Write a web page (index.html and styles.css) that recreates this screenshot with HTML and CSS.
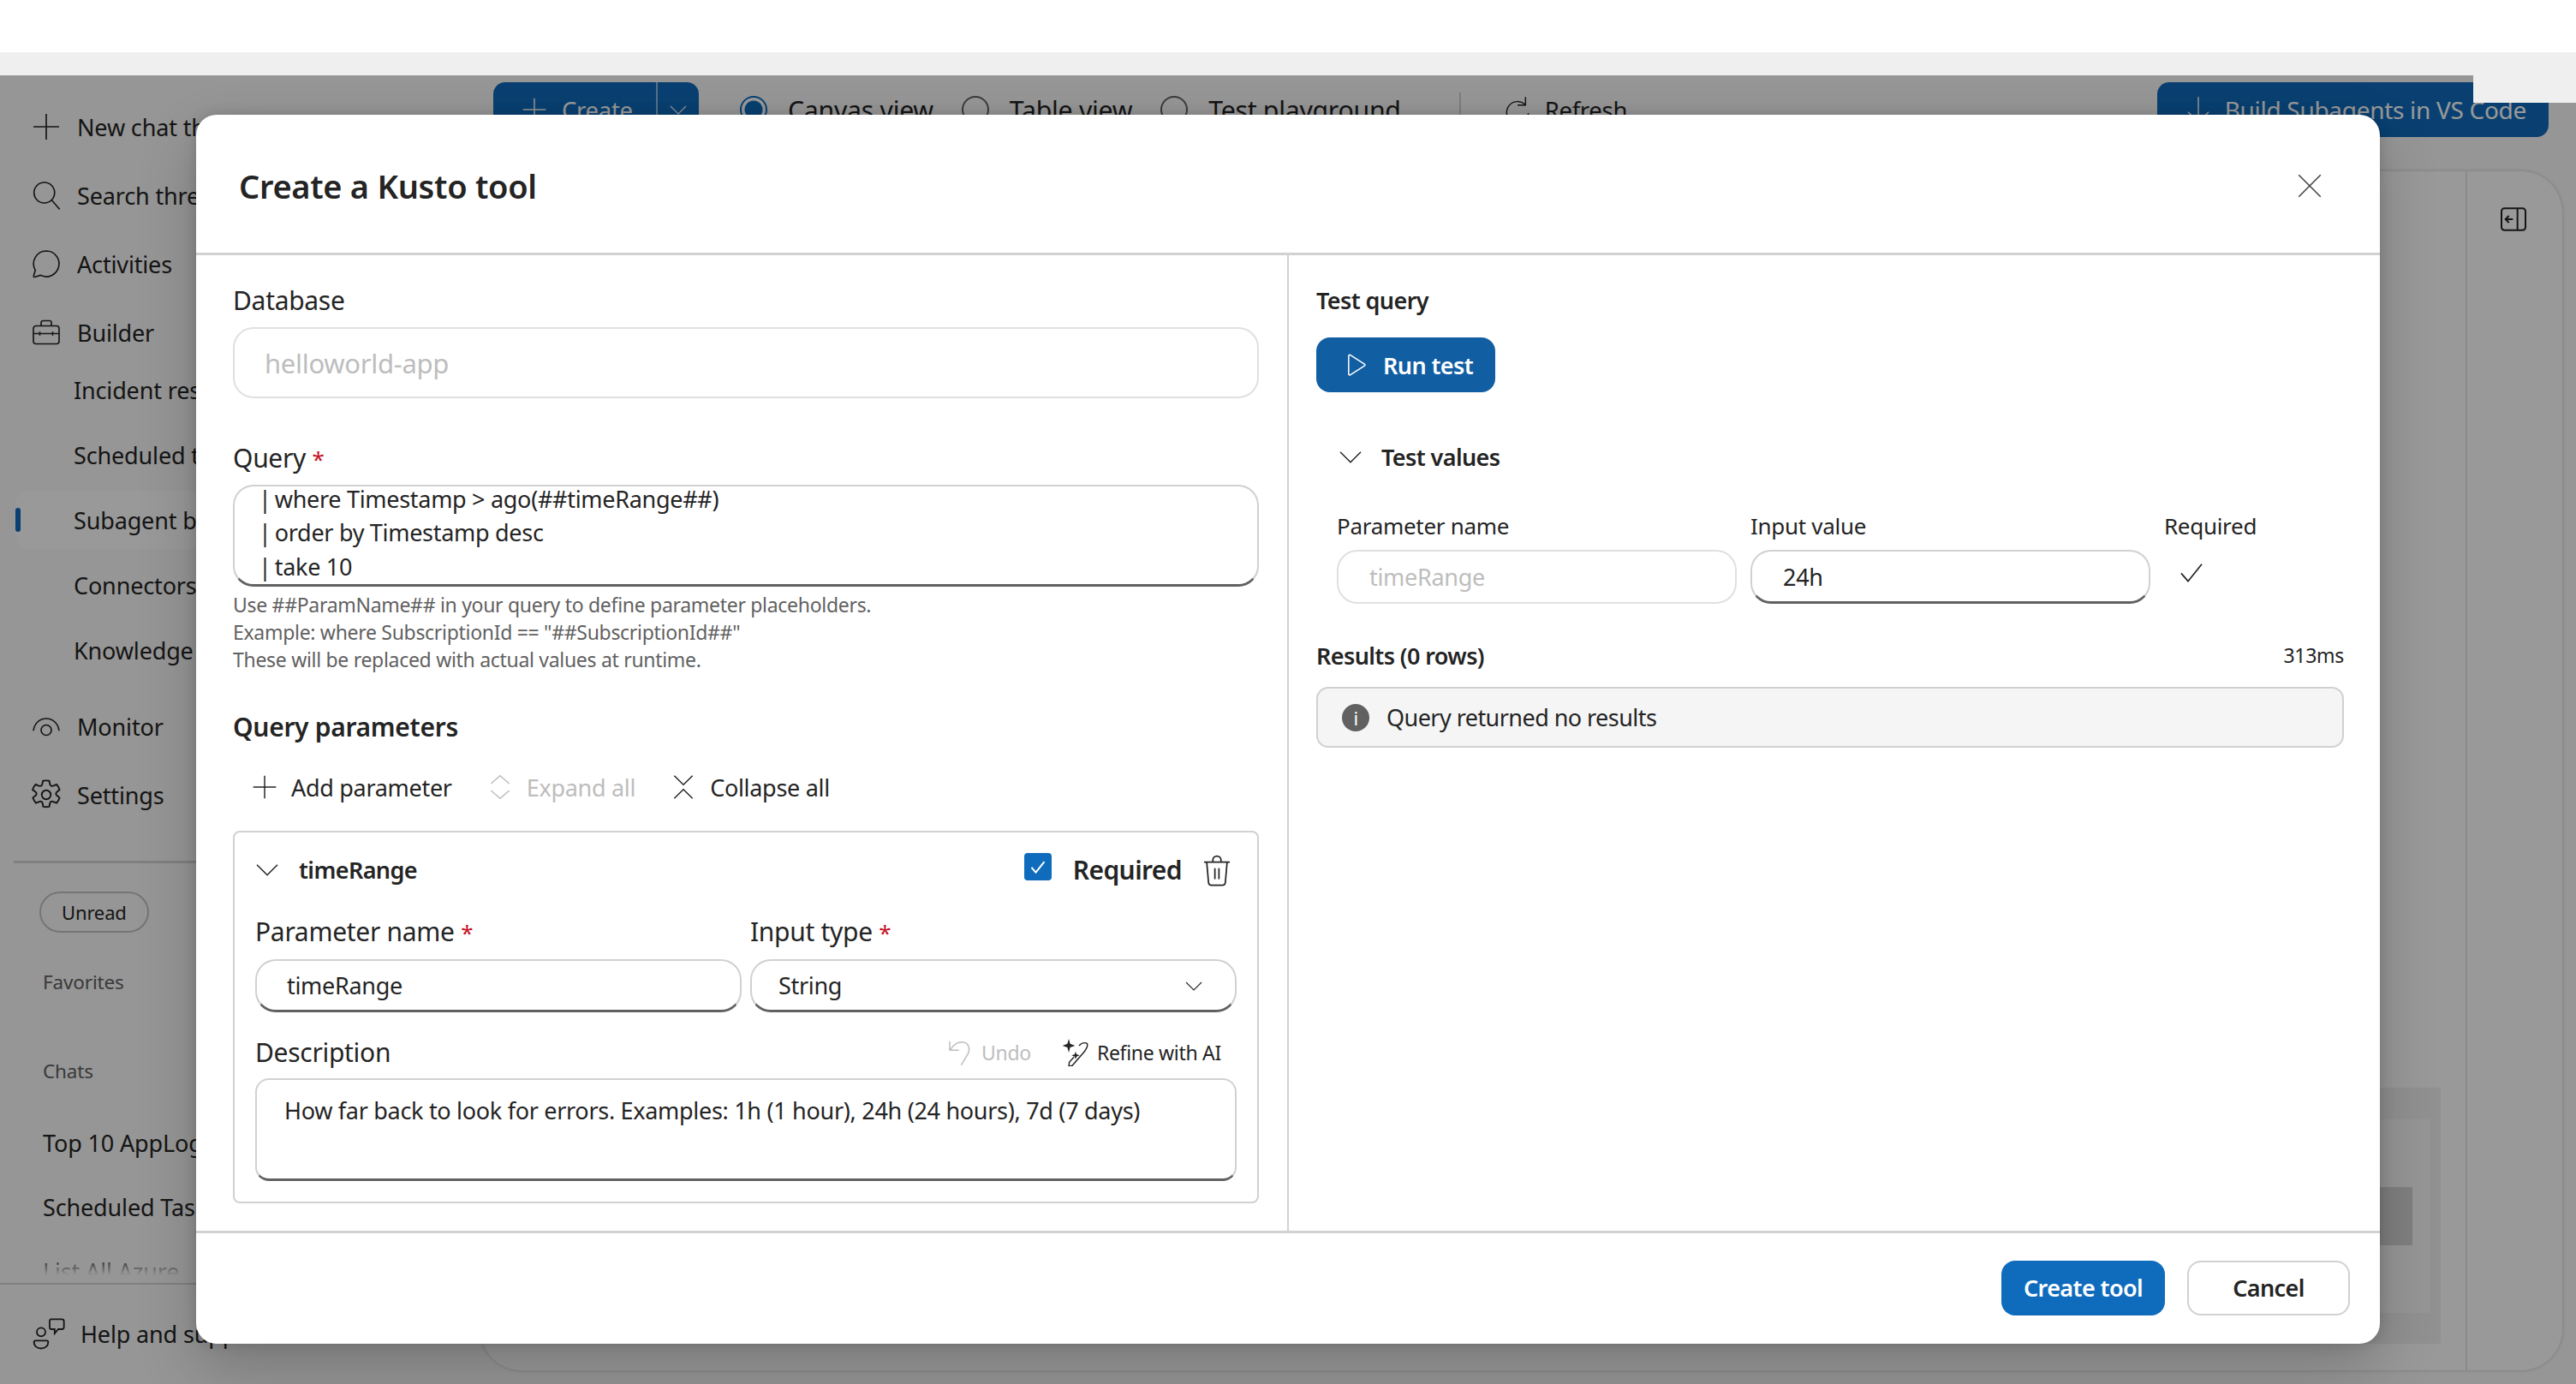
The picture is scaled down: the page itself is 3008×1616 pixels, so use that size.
FILE: index.html
```html
<!DOCTYPE html>
<html lang="en">
<head>
	<meta charset="UTF-8">
	<title>Create a Kusto tool</title>
	<link rel="stylesheet" href="styles.css">
</head>
<body>
<svg class="sprite" width="0" height="0">
	<symbol id="i-plus" viewBox="0 0 24 24"><path d="M12 2v20M2 12h20"/></symbol>
	<symbol id="i-search" viewBox="0 0 24 24"><circle cx="10.500" cy="10" r="8"/><path d="M16.300 15.800 22.500 23"/></symbol>
	<symbol id="i-chat" viewBox="0 0 24 24"><path d="M12 2a10 10 0 1 1-4.600 18.900L3 22.300c-.5.100-1-.3-.8-.9l1.300-4.400A10 10 0 0 1 12 2z"/></symbol>
	<symbol id="i-case" viewBox="0 0 24 24"><path d="M8 7V4.500C8 3.700 8.700 3 9.500 3h5c.8 0 1.500.7 1.500 1.500V7M4 7h16c1.100 0 2 .9 2 2v10c0 1.100-.9 2-2 2H4c-1.100 0-2-.9-2-2V9c0-1.100.9-2 2-2zM2 13h20M7 11.500v3M17 11.500v3"/></symbol>
	<symbol id="i-eye" viewBox="0 0 24 24"><path d="M2 15.500C2.800 9.500 7 6 12 6s9.200 3.500 10 9.500"/><circle cx="12" cy="15" r="4"/></symbol>
	<symbol id="i-gear" viewBox="0 0 24 24"><path d="M12 2.500c.7 0 1.400.1 2 .2l.5 2.300a1.500 1.500 0 0 0 2.200 1l2.200-.9c.9 1 1.600 2.200 2 3.500l-1.800 1.500a1.500 1.500 0 0 0 0 2.400l1.800 1.500c-.4 1.300-1.100 2.500-2 3.500l-2.200-.9a1.500 1.500 0 0 0-2.200 1l-.5 2.300c-.6.100-1.300.2-2 .2s-1.400-.1-2-.2l-.5-2.300a1.500 1.500 0 0 0-2.200-1l-2.200.9c-.9-1-1.600-2.200-2-3.500l1.800-1.500a1.500 1.500 0 0 0 0-2.400L2.900 8.600c.4-1.300 1.100-2.500 2-3.500l2.200.9a1.500 1.500 0 0 0 2.200-1l.5-2.300c.6-.1 1.300-.2 2-.2z"/><circle cx="12" cy="12" r="3"/></symbol>
	<symbol id="i-help" viewBox="0 0 24 24"><circle cx="6" cy="11" r="3"/><path d="M2 17h8c.6 0 1 .4 1 1 0 3-2.500 4.500-5 4.500S1 21 1 18c0-.6.4-1 1-1zM13 2h7.500c.8 0 1.500.7 1.500 1.500v4c0 .8-.7 1.500-1.500 1.500H18l-2.500 3V9H13c-.6 0-1-.7-1-1.500v-4C12 2.700 12.400 2 13 2z"/></symbol>
	<symbol id="i-down" viewBox="0 0 24 24"><path d="M3 8l9 9 9-9"/></symbol>
	<symbol id="i-arrow" viewBox="0 0 24 24"><path d="M12 1v22M3 14l9 9 9-9"/></symbol>
	<symbol id="i-close" viewBox="0 0 24 24"><path d="M3 3l18 18M21 3 3 21"/></symbol>
	<symbol id="i-expand" viewBox="0 0 24 24"><path d="M4 9l8-7 8 7M4 15l8 7 8-7"/></symbol>
	<symbol id="i-collapse" viewBox="0 0 24 24"><path d="M4 2l8 8 8-8M4 22l8-8 8 8"/></symbol>
	<symbol id="i-trash" viewBox="0 0 24 24"><path d="M2.500 5.500h19M9 5.500V4a3 3 0 0 1 6 0v1.500M4.500 5.500l1.300 15c.1 1.100 1 2 2.200 2h8c1.200 0 2.100-.9 2.200-2l1.300-15M10.500 10v8M13.500 10v8"/></symbol>
	<symbol id="i-undo" viewBox="0 0 24 24"><path d="M3 2v8h8M3 10c3-5 8-8 12-7 5 1 6 6 4 10l-6 10"/></symbol>
	<symbol id="i-refine" viewBox="0 0 24 24"><path class="solid" d="M6 0l1.200 4.300L11.500 6 7.200 7.500 6 12 4.800 7.500.5 6l4.300-1.700zM12 11l.8 2.500 2.700 1-2.700 1-.8 2.500-.8-2.500-2.700-1 2.700-1z"/><path d="M15 6c2-2.500 5-3 7-2 1 2-.5 5-3 8l-10 11.500-3 .5.500-3.500 4-4.500"/></symbol>
	<symbol id="i-play" viewBox="0 0 24 24"><path d="M5 3.200c0-1 1-1.500 1.800-1l14 9c.8.500.8 1.300 0 1.800l-14 9c-.8.500-1.800 0-1.800-1z"/></symbol>
	<symbol id="i-check" viewBox="0 0 24 24"><path d="M3 13l6 7L21 5"/></symbol>
	<symbol id="i-refresh" viewBox="0 0 24 24"><path d="M19 1v7h-7M19 8A9.500 9.500 0 1 0 21.500 15"/></symbol>
	<symbol id="i-panel" viewBox="0 0 24 24"><rect x="1.500" y="2.500" width="21" height="19" rx="2.500"/><path d="M15.500 2.500v19M11.500 12H5M8 9l-3 3 3 3"/></symbol>
</svg>

<div class="top-white"></div>
<div class="tab-strip"></div>

<div class="app">
	<aside class="sidebar">
		<nav class="nav">
			<a class="nav-row"><svg class="ic"><use href="#i-plus"/></svg>New chat thread</a>
			<a class="nav-row"><svg class="ic"><use href="#i-search"/></svg>Search threads</a>
			<a class="nav-row"><svg class="ic"><use href="#i-chat"/></svg>Activities</a>
			<a class="nav-row"><svg class="ic"><use href="#i-case"/></svg>Builder</a>
			<div class="sub-nav">
				<a class="sub-row">Incident response</a>
				<a class="sub-row">Scheduled tasks</a>
				<a class="sub-row on">Subagent builder</a>
				<a class="sub-row">Connectors</a>
				<a class="sub-row">Knowledge</a>
			</div>
			<a class="nav-row monitor"><svg class="ic"><use href="#i-eye"/></svg>Monitor</a>
			<a class="nav-row"><svg class="ic gear"><use href="#i-gear"/></svg>Settings</a>
		</nav>
		<div class="side-line"></div>
		<div class="chats">
			<span class="pill">Unread</span>
			<div class="side-head fav">Favorites</div>
			<div class="side-head chat-head">Chats</div>
			<div class="chat-row first">Top 10 AppLogs</div>
			<div class="chat-row">Scheduled Tasks</div>
			<div class="chat-row faded">List All Azure</div>
		</div>
		<div class="side-foot"><svg class="ic help"><use href="#i-help"/></svg>Help and support</div>
	</aside>

	<main class="main">
		<div class="toolbar">
			<div class="split-btn">
				<span class="split-main"><svg class="ic"><use href="#i-plus"/></svg>Create</span>
				<span class="split-arrow"><svg class="ic small"><use href="#i-down"/></svg></span>
			</div>
			<label class="radio checked"><i></i>Canvas view</label>
			<label class="radio"><i></i>Table view</label>
			<label class="radio"><i></i>Test playground</label>
			<span class="tool-line"></span>
			<span class="refresh"><svg class="ic"><use href="#i-refresh"/></svg>Refresh</span>
			<span class="vs-btn"><svg class="ic"><use href="#i-arrow"/></svg>Build Subagents in VS Code</span>
		</div>
		<section class="panel">
			<div class="canvas">
				<div class="node"><div class="node-inner"><div class="node-dark"></div></div></div>
			</div>
			<div class="rail"><svg class="ic panel-ic"><use href="#i-panel"/></svg></div>
		</section>
	</main>
	<div class="overlay"></div>
</div>
<div class="corner-patch"></div>

<div class="modal">
	<header class="modal-head">
		<h1>Create a Kusto tool</h1>
		<svg class="ic close"><use href="#i-close"/></svg>
	</header>
	<div class="modal-body">
		<div class="col-left">
			<div class="label db-label">Database</div>
			<div class="input disabled big">helloworld-app</div>
			<div class="label query-label">Query <b>*</b></div>
			<div class="code">
				<div>|&#8201;where Timestamp &gt; ago(##timeRange##)</div>
				<div>|&#8201;order by Timestamp desc</div>
				<div>|&#8201;take 10</div>
			</div>
			<div class="hint">Use ##ParamName## in your query to define parameter placeholders.<br>Example: where SubscriptionId == "##SubscriptionId##"<br>These will be replaced with actual values at runtime.</div>
			<h2>Query parameters</h2>
			<div class="actions">
				<span class="act"><svg class="ic"><use href="#i-plus"/></svg>Add parameter</span>
				<span class="act off"><svg class="ic"><use href="#i-expand"/></svg>Expand all</span>
				<span class="act"><svg class="ic"><use href="#i-collapse"/></svg>Collapse all</span>
			</div>
			<div class="param-card">
				<div class="param-head">
					<svg class="ic chev"><use href="#i-down"/></svg>
					<span class="param-name">timeRange</span>
					<span class="checkbox"><svg class="ic"><use href="#i-check"/></svg></span>
					<span class="param-req">Required</span>
					<svg class="ic trash"><use href="#i-trash"/></svg>
				</div>
				<div class="param-grid">
					<div>
						<div class="label">Parameter name <b>*</b></div>
						<div class="input field">timeRange</div>
					</div>
					<div>
						<div class="label">Input type <b>*</b></div>
						<div class="input field select">String<svg class="ic small"><use href="#i-down"/></svg></div>
					</div>
				</div>
				<div class="desc-row">
					<div class="label">Description</div>
					<span class="mini off"><svg class="ic"><use href="#i-undo"/></svg>Undo</span>
					<span class="mini"><svg class="ic"><use href="#i-refine"/></svg>Refine with AI</span>
				</div>
				<div class="input desc">How far back to look for errors. Examples: 1h (1 hour), 24h (24 hours), 7d (7 days)</div>
			</div>
		</div>
		<div class="col-right">
			<div class="strong test-title">Test query</div>
			<button class="btn primary run"><svg class="ic"><use href="#i-play"/></svg>Run test</button>
			<div class="strong test-values"><svg class="ic"><use href="#i-down"/></svg>Test values</div>
			<div class="value-grid">
				<div class="small-label">Parameter name</div>
				<div class="small-label">Input value</div>
				<div class="small-label">Required</div>
				<div class="input disabled cell">timeRange</div>
				<div class="input cell active">24h</div>
				<div class="tick"><svg class="ic"><use href="#i-check"/></svg></div>
			</div>
			<div class="result-head">
				<span class="strong">Results (0 rows)</span>
				<span class="ms">313ms</span>
			</div>
			<div class="message"><span class="info">i</span>Query returned no results</div>
		</div>
	</div>
	<footer class="modal-foot">
		<button class="btn primary create">Create tool</button>
		<button class="btn cancel">Cancel</button>
	</footer>
</div>
</body>
</html>
```

FILE: styles.css
```css
* {
	box-sizing: border-box;
}

html, body {
	margin: 0;
	width: 3008px;
	height: 1616px;
	overflow: hidden;
	background: #fff;
	color: #242424;
	font-family: "Noto Sans", "Liberation Sans", sans-serif;
	font-size: 27px;
	letter-spacing: -.3px;
}

.sprite {
	position: absolute;
}

.ic {
	width: 32px;
	height: 32px;
	flex: none;
	fill: none;
	stroke: currentColor;
	stroke-width: 1.1;
}

.ic.small {
	width: 24px;
	height: 24px;
}

.solid {
	fill: currentColor;
	stroke: none;
}

.top-white {
	height: 61px;
	background: #fff;
}

.tab-strip {
	height: 27px;
	background: #efefef;
}

.corner-patch {
	position: absolute;
	left: 2888px;
	top: 88px;
	width: 120px;
	height: 32px;
	background: #efefef;
}

/* app behind the dialog */
.app {
	position: relative;
	display: flex;
	height: 1528px;
	background: #fafafa;
	overflow: hidden;
}

.overlay {
	position: absolute;
	inset: 0;
	background: rgba(0, 0, 0, .4);
}

.sidebar {
	display: flex;
	flex-direction: column;
	flex: none;
	width: 561px;
	letter-spacing: -.15px;
}

.nav {
	display: flex;
	flex-direction: column;
	padding: 30px 0 0 0;
}

.nav-row {
	display: flex;
	align-items: center;
	gap: 18px;
	height: 60px;
	margin-bottom: 20px;
	padding-left: 36px;
}

.nav-row .ic {
	width: 36px;
	height: 36px;
}

.nav-row .ic.gear {
	width: 42px;
	height: 42px;
	margin: 0 -3px;
}

.sub-nav {
	display: flex;
	flex-direction: column;
	gap: 8px;
	margin: -17px 0 25px;
}

.sub-row {
	position: relative;
	display: flex;
	align-items: center;
	height: 68px;
	margin-left: 18px;
	padding-left: 68px;
	border-radius: 16px;
}

.sub-row.on {
	background: #fff;
}

.sub-row.on::before {
	content: "";
	position: absolute;
	left: 0;
	top: 20px;
	width: 6px;
	height: 28px;
	border-radius: 3px;
	background: #0f6cbd;
}

.side-line {
	height: 3px;
	margin: 27px 0 0 16px;
	background: #d6d6d6;
}

.chats {
	flex: 1;
	overflow: hidden;
	padding: 33px 0 0 46px;
}

.pill {
	display: inline-flex;
	align-items: center;
	height: 48px;
	padding: 0 24px;
	border: 2px solid #c4c4c4;
	border-radius: 24px;
	font-size: 22px;
}

.side-head {
	height: 30px;
	margin-left: 4px;
	line-height: 30px;
	font-size: 22.500px;
	color: #616161;
}

.fav {
	margin-top: 43px;
}

.chat-head {
	margin-top: 74px;
}

.chat-row {
	height: 40px;
	margin: 35px 0 0 4px;
	line-height: 40px;
}

.chat-row.first {
	margin-top: 49px;
}

.chat-row.faded {
	-webkit-mask-image: linear-gradient(#000 25%, transparent 60%);
	mask-image: linear-gradient(#000 25%, transparent 60%);
	opacity: .6;
}

.side-foot {
	display: flex;
	align-items: center;
	gap: 16px;
	height: 118px;
	padding: 0 0 2px 38px;
	border-top: 2px solid #d6d6d6;
}

.ic.help {
	width: 40px;
	height: 40px;
}

.main {
	display: flex;
	flex-direction: column;
	flex: 1;
	min-width: 0;
	padding: 8px 16px 16px 0;
}

.toolbar {
	display: flex;
	align-items: center;
	height: 64px;
	padding: 0 16px 0 15px;
	font-size: 30.300px;
}

.split-btn {
	display: flex;
	height: 64px;
	width: 240px;
	border-radius: 14px;
	background: #0f6cbd;
	color: #fff;
	font-size: 27.500px;
}

.split-main {
	display: flex;
	align-items: center;
	gap: 16px;
	width: 192px;
	padding-left: 32px;
	border-right: 2px solid #8fbde4;
}

.split-arrow {
	display: flex;
	align-items: center;
	justify-content: center;
	flex: 1;
}

.radio {
	display: flex;
	align-items: center;
	gap: 24px;
	margin-left: 33px;
}

.radio.checked {
	margin-left: 48px;
}

.radio i {
	width: 32px;
	height: 32px;
	border: 2px solid #616161;
	border-radius: 50%;
}

.radio.checked i {
	border-color: #0f6cbd;
	background: radial-gradient(circle, #0f6cbd 0 10px, #fff 11px);
}

.tool-line {
	width: 2px;
	height: 40px;
	margin-left: 68px;
	background: #d1d1d1;
}

.refresh {
	display: flex;
	align-items: center;
	gap: 16px;
	margin-left: 50px;
	font-size: 27.500px;
}

.vs-btn {
	display: flex;
	align-items: center;
	gap: 15px;
	height: 64px;
	margin-left: auto;
	padding: 0 26px 0 32px;
	border-radius: 14px;
	background: #0f6cbd;
	color: #fff;
	font-size: 28px;
}

.panel {
	display: flex;
	flex: 1;
	margin-top: 40px;
	border-radius: 48px;
	background: #fff;
	box-shadow: 0 0 4px rgba(0, 0, 0, .2);
	overflow: hidden;
}

.canvas {
	position: relative;
	flex: 1;
}

.node {
	position: absolute;
	right: 29px;
	top: 1070px;
	width: 400px;
	height: 299px;
	padding: 37px 12px 36px 0;
	background: #f2f2f2;
}

.node-inner {
	position: relative;
	height: 226px;
	background: #fafafa;
}

.node-dark {
	position: absolute;
	right: 21px;
	top: 79px;
	width: 300px;
	height: 68px;
	background: #d6d6d6;
}

.rail {
	flex: none;
	width: 113px;
	padding: 40px 0 0 38px;
	border-left: 2px solid #e6e6e6;
}

.panel-ic {
	stroke-width: 1.500;
}

/* dialog */
.modal {
	position: absolute;
	left: 229px;
	top: 134px;
	display: flex;
	flex-direction: column;
	width: 2550px;
	height: 1435px;
	border-radius: 24px;
	background: #fff;
	box-shadow: 0 30px 70px rgba(0, 0, 0, .2), 0 0 16px rgba(0, 0, 0, .16);
}

.modal-head {
	display: flex;
	align-items: center;
	justify-content: space-between;
	flex: none;
	height: 164px;
	padding: 0 65px 0 50px;
	border-bottom: 3px solid #d1d1d1;
}

h1 {
	margin: 4px 0 0;
	font-size: 38px;
	font-weight: 600;
}

.ic.close {
	width: 34px;
	height: 34px;
	margin-top: 4px;
	color: #424242;
}

.modal-body {
	display: flex;
	flex: 1;
	min-height: 0;
}

.col-left {
	flex: none;
	width: 1276px;
	padding: 33px 0 0 43px;
	border-right: 2px solid #d1d1d1;
}

.label {
	height: 40px;
	line-height: 40px;
	font-size: 30px;
}

.label b {
	font-size: 26px;
	font-weight: 400;
	color: #c50f1f;
}

.query-label {
	margin-top: 50px;
}

.input {
	display: flex;
	align-items: center;
	border: 2px solid #d1d1d1;
	border-bottom: 3px solid #616161;
	border-radius: 24px;
	background: #fff;
}

.input.disabled {
	border: 2px solid #e0e0e0;
	color: #bdbdbd;
}

.big {
	width: 1198px;
	height: 83px;
	margin-top: 11px;
	padding-left: 35px;
	font-size: 31px;
}

.code {
	display: flex;
	flex-direction: column;
	justify-content: flex-end;
	width: 1198px;
	height: 119px;
	margin-top: 11px;
	padding: 0 0 1px 28px;
	overflow: hidden;
	border: 2px solid #d1d1d1;
	border-bottom: 3px solid #616161;
	border-radius: 24px;
	line-height: 39.500px;
}

.hint {
	margin-top: 5px;
	line-height: 32px;
	font-size: 23px;
	color: #616161;
}

h2 {
	margin: 41px 0 0;
	line-height: 44px;
	font-size: 30px;
	font-weight: 600;
}

.actions {
	display: flex;
	align-items: center;
	height: 48px;
	margin: 24px 0 0 21px;
}

.act {
	display: flex;
	align-items: center;
	gap: 15px;
	margin-right: 40px;
}

.act.off, .mini.off {
	color: #bdbdbd;
}

.param-card {
	width: 1198px;
	height: 435px;
	margin-top: 27px;
	padding: 13px 24px 0;
	border: 2px solid #d1d1d1;
	border-radius: 8px;
}

.param-head {
	display: flex;
	align-items: center;
	height: 60px;
}

.chev {
	margin: 0 21px 0 -2px;
}

.param-name {
	font-weight: 600;
	letter-spacing: -.6px;
	margin-right: auto;
}

.checkbox {
	display: flex;
	align-items: center;
	justify-content: center;
	width: 32px;
	height: 32px;
	margin: -6px 25px 0 0;
	border-radius: 4px;
	background: #0f6cbd;
	color: #fff;
}

.checkbox .ic {
	width: 20px;
	height: 20px;
	stroke-width: 2.400;
}

.param-req {
	font-size: 30px;
	font-weight: 600;
	letter-spacing: -.6px;
}

.trash {
	width: 38px;
	height: 38px;
	margin: 4px 4px 0 22px;
}

.param-grid {
	display: grid;
	grid-template-columns: 568px 568px;
	column-gap: 10px;
	margin-top: 23px;
}

.field {
	height: 62px;
	margin-top: 12px;
	padding-left: 35px;
}

.select {
	justify-content: space-between;
	padding: 0 36px 0 31px;
}

.desc-row {
	display: flex;
	align-items: center;
	margin-top: 27px;
}

.desc-row .label {
	margin-right: auto;
}

.mini {
	display: flex;
	align-items: center;
	gap: 9px;
	margin-right: 18px;
	font-size: 23px;
}

.mini.off {
	margin-right: 36px;
}

.desc {
	align-items: flex-start;
	height: 120px;
	margin-top: 10px;
	padding: 17px 0 0 32px;
	border-radius: 16px;
}

.col-right {
	flex: 1;
	padding: 33px 42px 0 32px;
}

.strong {
	font-weight: 600;
	letter-spacing: -.6px;
}

.test-title {
	height: 40px;
	line-height: 40px;
}

.btn {
	display: inline-flex;
	align-items: center;
	justify-content: center;
	height: 64px;
	padding: 0;
	border: 0;
	border-radius: 16px;
	font: 600 27px "Noto Sans", "Liberation Sans", sans-serif;
	letter-spacing: -.6px;
	color: #242424;
	background: #fff;
}

.btn.primary {
	color: #fff;
	background: #0f6cbd;
}

.btn.run {
	justify-content: flex-start;
	gap: 18px;
	width: 209px;
	margin-top: 23px;
	padding-left: 32px;
	background: #115ea3;
}

.run .ic {
	width: 28px;
	height: 28px;
	stroke-width: 1.300;
}

.test-values {
	display: flex;
	align-items: center;
	gap: 20px;
	height: 40px;
	margin: 55px 0 0 24px;
}

.value-grid {
	display: grid;
	grid-template-columns: 467px 467px auto;
	column-gap: 16px;
	row-gap: 8px;
	margin: 41px 0 0 24px;
	font-size: 26px;
}

.small-label {
	height: 40px;
	line-height: 40px;
}

.cell {
	height: 63px;
	padding-left: 36px;
	font-size: 27px;
}

.tick {
	display: flex;
	align-items: flex-start;
	padding: 10px 0 0 16px;
}

.tick .ic {
	stroke-width: 1.300;
}

.result-head {
	display: flex;
	align-items: center;
	justify-content: space-between;
	height: 40px;
	margin-top: 40px;
}

.ms {
	font-size: 23px;
}

.message {
	display: flex;
	align-items: center;
	gap: 20px;
	height: 71px;
	margin-top: 17px;
	padding-left: 28px;
	border: 2px solid #d1d1d1;
	border-radius: 14px;
	background: #f5f5f5;
	letter-spacing: -.55px;
}

.info {
	display: flex;
	align-items: center;
	justify-content: center;
	width: 32px;
	height: 32px;
	border-radius: 50%;
	background: #616161;
	color: #fff;
	font-size: 22px;
}

.modal-foot {
	display: flex;
	align-items: center;
	justify-content: flex-end;
	gap: 26px;
	flex: none;
	height: 132px;
	padding: 0 35px 2px 0;
	border-top: 3px solid #d1d1d1;
}

.create {
	width: 191px;
}

.cancel {
	width: 190px;
	border: 2px solid #d1d1d1;
}
```
